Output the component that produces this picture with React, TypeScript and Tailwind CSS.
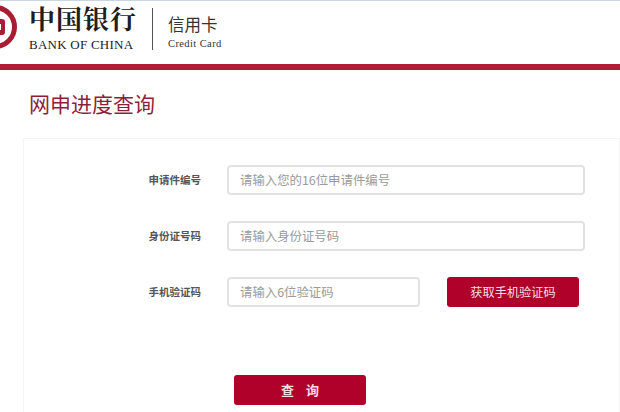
import React from "react";

const cjk = "font-['Noto_Sans_CJK_SC','Noto_Sans',sans-serif]";
const serif = "font-['Liberation_Serif','Noto_Serif_CJK_SC',serif]";

function Logo() {
  return (
    <svg width="18" height="46" viewBox="0 0 18 46" className="shrink-0">
      <circle cx="-5" cy="23" r="19.5" fill="none" stroke="#a81c34" strokeWidth="5" />
      <rect x="-10" y="15" width="15" height="16" rx="3" fill="#a81c34" />
      <rect x="-4" y="20" width="5" height="6" fill="#fff" />
    </svg>
  );
}

function Field({ label, placeholder, short }: { label: string; placeholder: string; short?: boolean }) {
  return (
    <div className="flex items-center h-[30px]">
      <div className="w-[203px] pr-[26px] text-right text-[10.5px] font-bold text-[#555]">{label}</div>
      <input
        readOnly
        placeholder={placeholder}
        className={`${short ? "w-[193px]" : "w-[358px]"} h-[30px] rounded-[4px] border-2 border-[#e2e2e2] bg-white px-[11px] text-[12.4px] placeholder:text-[#9a9a9a] outline-none`}
      />
      {short && (
        <button className="ml-[27px] w-[132px] h-[30px] rounded-[3px] bg-[#b0012a] text-[#f6dfe4] text-[12.2px]">
          获取手机验证码
        </button>
      )}
    </div>
  );
}

export default function App() {
  return (
    <div className={`w-[620px] h-[412px] overflow-hidden bg-white ${cjk}`}>
      <div className="h-px bg-[#c9d6df]" />
      <header className="h-[63px] flex items-start">
        <div className="mt-[3px]">
          <Logo />
        </div>
        <div className="ml-[11px] mt-[3px] w-[106px]">
          <div className={`text-[26px] leading-[34px] text-[#1e1e1e] font-bold tracking-[1px] whitespace-nowrap ${serif}`}>中国银行</div>
          <div className={`text-[13px] leading-[14px] text-[#222] tracking-[0.25px] whitespace-nowrap ${serif}`}>BANK OF CHINA</div>
        </div>
        <div className="ml-[17px] mt-[7px] w-px h-[42px] bg-[#555]" />
        <div className="ml-[15px] mt-[12px]">
          <div className="text-[16.5px] leading-[22px] text-[#333] whitespace-nowrap">信用卡</div>
          <div className={`mt-[3px] text-[10.5px] leading-[12px] text-[#333] tracking-[0.4px] whitespace-nowrap ${serif}`}>Credit Card</div>
        </div>
      </header>
      <div className="h-[6px] bg-[#ae1c37]" />
      <h1 className="ml-[29px] mt-[18px] h-[50px] text-[21px] leading-[30px] text-[#8e1f3c]">网申进度查询</h1>
      <main className="ml-[23px] h-[300px] border border-[#f5f5f5] pt-[26px]">
        <div className="flex flex-col gap-[26px]">
          <Field label="申请件编号" placeholder="请输入您的16位申请件编号" />
          <Field label="身份证号码" placeholder="请输入身份证号码" />
          <Field label="手机验证码" placeholder="请输入6位验证码" short />
        </div>
        <button className="block ml-[210px] mt-[68px] w-[132px] h-[30px] rounded-[3px] bg-[#b0012a] text-[#f6dfe4] text-[13px] font-bold">
          查&nbsp;&nbsp;&nbsp;&nbsp;询
        </button>
      </main>
    </div>
  );
}
